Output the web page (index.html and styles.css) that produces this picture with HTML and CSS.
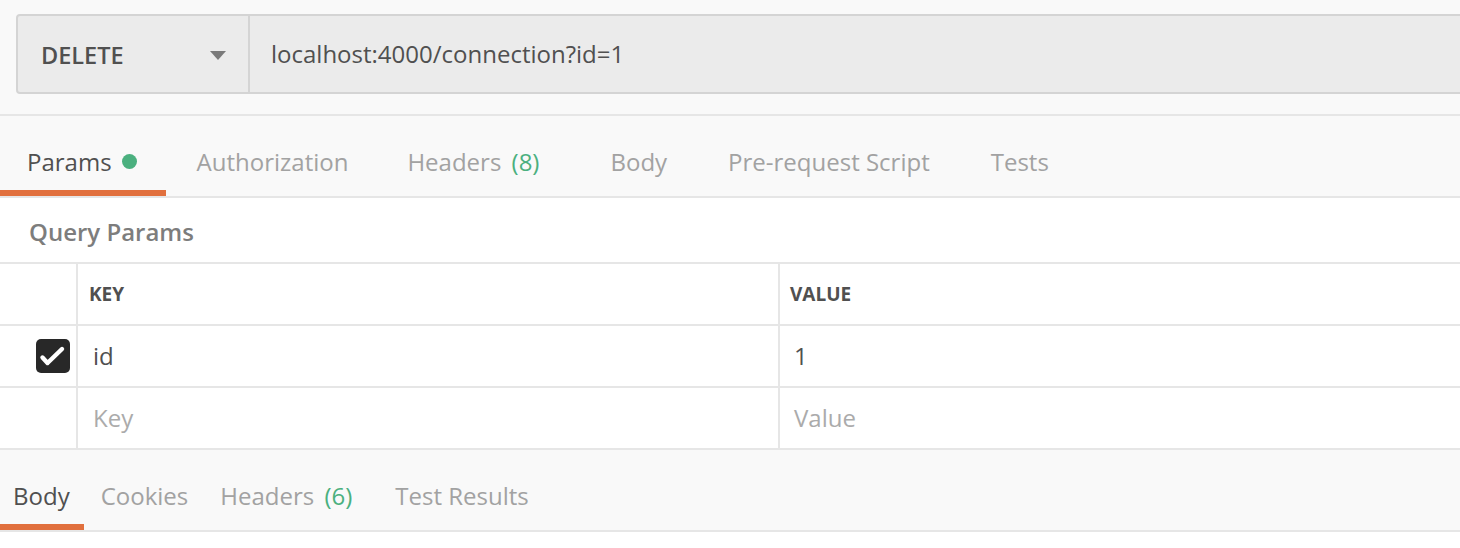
FILE: index.html
```html
<!DOCTYPE html>
<html>
<head>
<meta charset="utf-8">
<link rel="stylesheet" href="styles.css">
</head>
<body>
<div class="top">
  <div class="bar">
    <div class="method"><span>DELETE</span><span class="caret"></span></div>
    <div class="url">localhost:4000/connection?id=1</div>
  </div>
</div>
<div class="tabs req-tabs">
  <div class="tab active">Params<span class="dot"></span></div>
  <div class="tab">Authorization</div>
  <div class="tab">Headers <span class="count">(8)</span></div>
  <div class="tab">Body</div>
  <div class="tab">Pre-request Script</div>
  <div class="tab">Tests</div>
</div>
<div class="section-title">Query Params</div>
<div class="table">
  <div class="row head">
    <div class="cell check"></div>
    <div class="cell key">KEY</div>
    <div class="cell val">VALUE</div>
  </div>
  <div class="row">
    <div class="cell check"><span class="box"><svg width="34" height="34" viewBox="0 0 34 34"><path d="M6.5 18.5 L11.5 24 L26 10" fill="none" stroke="#fff" stroke-width="4.4" stroke-linecap="round" stroke-linejoin="round"/></svg></span></div>
    <div class="cell key text">id</div>
    <div class="cell val text">1</div>
  </div>
  <div class="row">
    <div class="cell check"></div>
    <div class="cell key text ph">Key</div>
    <div class="cell val text ph">Value</div>
  </div>
</div>
<div class="tabs res-tabs">
  <div class="tab active">Body</div>
  <div class="tab">Cookies</div>
  <div class="tab">Headers <span class="count">(6)</span></div>
  <div class="tab">Test Results</div>
</div>
</body>
</html>
```
FILE: styles.css
```css
html, body {
  margin: 0;
  padding: 0;
  background: #ffffff;
  font-family: "Open Sans", "Noto Sans", sans-serif;
  color: #505050;
  overflow: hidden;
}
.top {
  background: #f9f9f9;
  height: 116px;
  box-sizing: border-box;
  padding: 14px 0 0 16px;
  border-bottom: 2px solid #e6e6e6;
  overflow: hidden;
}
.bar {
  display: flex;
  height: 80px;
  box-sizing: border-box;
  width: calc(100% + 20px);
  background: #ebebeb;
  border: 2px solid #d4d4d4;
  border-radius: 4px;
}
.method {
  width: 232px;
  box-sizing: border-box;
  border-right: 2px solid #d4d4d4;
  display: flex;
  align-items: center;
  justify-content: space-between;
  padding: 0 22px 0 23px;
  font-size: 23.5px;
  font-weight: 600;
  color: #505050;
}
.method span:first-child {
  margin-top: 2px;
}
.caret {
  width: 0;
  height: 0;
  border-left: 8px solid transparent;
  border-right: 8px solid transparent;
  border-top: 9px solid #7a7a7a;
  margin-top: 2px;
}
.url {
  display: flex;
  align-items: center;
  padding-left: 21px;
  font-size: 24px;
  color: #505050;
  margin-top: -2px;
}
.tabs {
  display: flex;
  background: #f9f9f9;
  height: 80px;
  border-bottom: 2px solid #e6e6e6;
}
.tab {
  display: flex;
  align-items: center;
  height: 80px;
  box-sizing: border-box;
  font-size: 24px;
  color: #a2a2a2;
  white-space: pre;
}
.tab.active {
  color: #505050;
  box-shadow: inset 0 -6px 0 #e1703e;
}
.count {
  color: #4bb07f;
  margin-left: 4px;
}
.req-tabs .tab { padding: 10px 30px 0 31px; }
.req-tabs .tab:first-child { padding: 10px 29px 0 27px; }
.req-tabs .tab:nth-child(3) { padding-left: 29px; padding-right: 40px; }
.dot {
  width: 15px;
  height: 15px;
  border-radius: 50%;
  background: #4bb07f;
  margin-left: 10px;
}
.res-tabs .tab { padding: 10px 17px 0 17px; }
.res-tabs .tab:first-child { padding: 10px 14px 0 13px; }
.res-tabs .tab:nth-child(2) { padding-right: 15px; }
.res-tabs .tab:nth-child(3) { padding-left: 17px; padding-right: 26px; }
.section-title {
  display: flex;
  align-items: center;
  padding-left: 29px;
  padding-top: 3px;
  font-size: 24px;
  font-weight: 600;
  color: #7d7d7d;
  box-sizing: border-box;
  height: 64px;
}
.table {
  border-top: 2px solid #e6e6e6;
}
.row {
  display: flex;
  height: 62px;
  box-sizing: border-box;
  border-bottom: 2px solid #e6e6e6;
}
.cell {
  display: flex;
  align-items: center;
  box-sizing: border-box;
}
.check {
  width: 78px;
  border-right: 2px solid #e6e6e6;
  padding-left: 36px;
}
.key {
  width: 702px;
  border-right: 2px solid #e6e6e6;
  padding-left: 11px;
}
.val {
  flex: 1;
  padding-left: 10px;
}
.head .cell {
  font-size: 19px;
  font-weight: 700;
  color: #505050;
}
.text {
  font-size: 24px;
  color: #505050;
  padding-left: 15px;
  padding-bottom: 2px;
}
.val.text { padding-left: 14px; }
.ph { color: #ababab; }
.box {
  width: 34px;
  height: 34px;
  border-radius: 5px;
  background: #282828;
  display: flex;
  align-items: center;
  justify-content: center;
}
```
